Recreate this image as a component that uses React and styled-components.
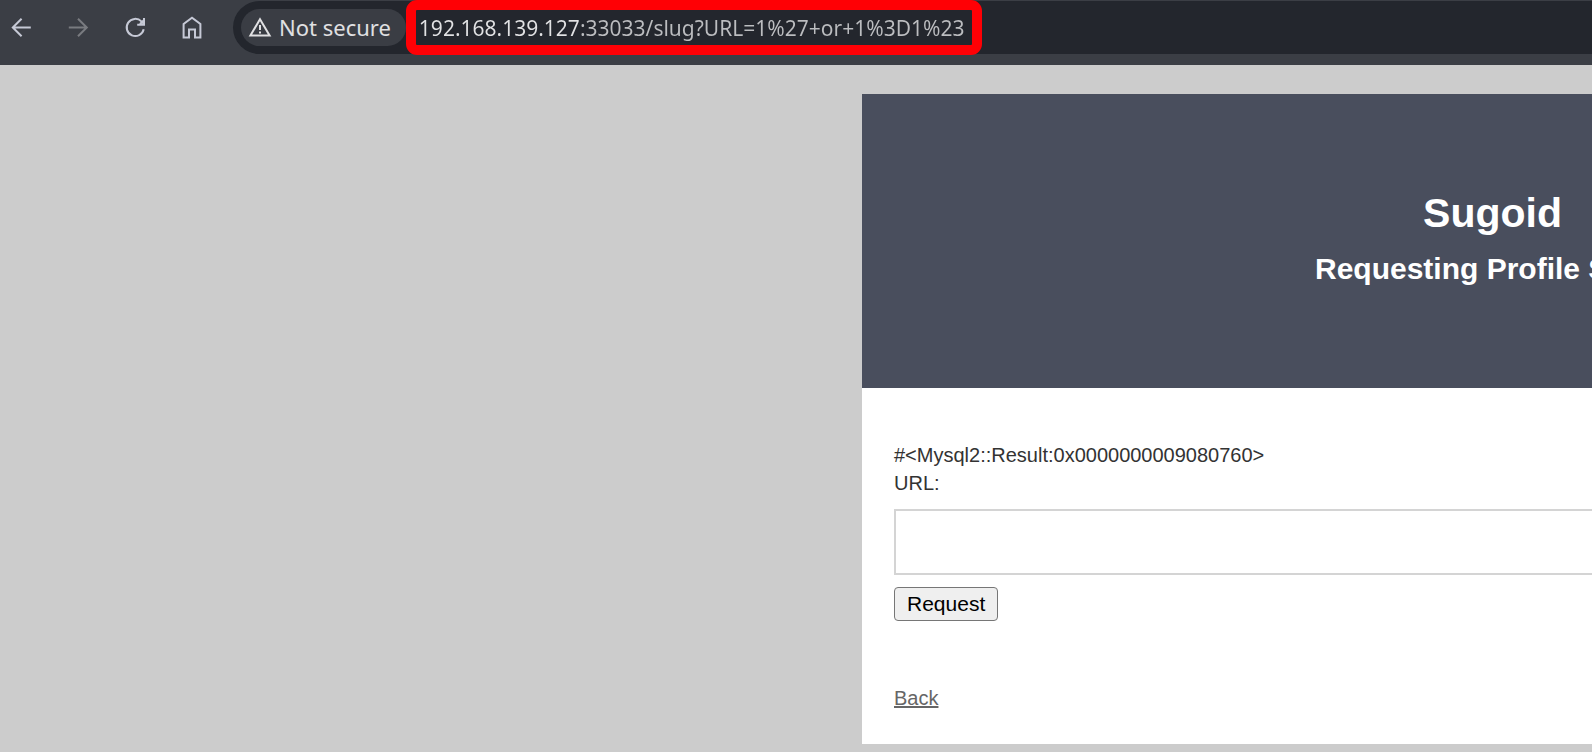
import React from "react";
import styled, { createGlobalStyle } from "styled-components";

const GlobalStyle = createGlobalStyle`
  * {
    box-sizing: border-box;
  }
  body {
    margin: 0;
    background-color: #ccc;
    font-family: "Liberation Sans", Arial, sans-serif;
  }
`;
const Window = styled.div`
  min-height: 100vh;
  overflow: hidden;
`;
const Toolbar = styled.div`
  display: flex;
  height: 65px;
  padding: 1px 0 11px 7px;
  background-color: #3b3e45;
  font-family: "Noto Sans", sans-serif;
  font-size: 22px;
`;
const NavButtons = styled.div`
  display: flex;
  align-items: center;
  gap: 29px;
  margin-right: 27px;
`;
const NavButton = styled.button`
  display: flex;
  padding: 0;
  border: 0;
  background: none;
  color: ${(props) => (props.disabled ? "#797b80" : "#c6c9d6")};
`;
const AddressBar = styled.div`
  display: flex;
  flex: 1;
  align-items: center;
  padding-left: 8px;
  border-radius: 27px 0 0 27px;
  background-color: #23262d;
`;
const SecurityChip = styled.button`
  display: flex;
  align-items: center;
  gap: 7px;
  height: 37px;
  padding: 0 15px 2px 7px;
  border: 0;
  border-radius: 19px;
  background-color: #3a3d44;
  color: #e0e0e2;
  font: inherit;
  white-space: nowrap;
`;
const Highlight = styled.div`
  display: flex;
  align-items: center;
  width: 576px;
  height: 55px;
  padding: 0 3px;
  border: 10px solid #ff0005;
  border-radius: 11px;
`;
/* the host part of the address is brighter than the path */
const Address = styled.input`
  width: 100%;
  padding: 0;
  border: 0;
  outline: 0;
  background: linear-gradient(to right, #e2e2e4 162px, #bcbdc0 162px);
  background-clip: text;
  -webkit-background-clip: text;
  -webkit-text-fill-color: transparent;
  color: #bcbdc0;
  font: inherit;
  font-size: 21px;
`;
const Page = styled.main`
  display: flex;
  justify-content: center;
  width: 187.5%;
  padding: 29px 0 8px;
`;
const Card = styled.div`
  width: 1261px;
  background-color: #fff;
  color: #333;
  font-size: 20px;
  line-height: 28px;
`;
const Header = styled.header`
  display: flex;
  flex-direction: column;
  align-items: center;
  gap: 8px;
  padding: 95px 32px;
  background-color: #494e5d;
  color: #fff;
`;
const Title = styled.h1`
  margin: 0;
  font-size: 41px;
  line-height: 48px;
`;
const Subtitle = styled.h2`
  margin: 0;
  font-size: 30px;
  line-height: 48px;
`;
const Content = styled.div`
  padding: 53px 32px 32px;
`;
const Form = styled.form`
  display: flex;
  flex-direction: column;
  align-items: flex-start;
  gap: 12px;
  margin-bottom: 63px;
`;
const UrlInput = styled.input`
  width: 100%;
  height: 66px;
  padding: 0 16px;
  border: 2px solid #d4d4d4;
  font: inherit;
`;
const RequestButton = styled.button`
  height: 34px;
  padding: 0 12px;
  border: 1px solid #767676;
  border-radius: 4px;
  background-color: #efefef;
  color: #000;
  font-family: inherit;
  font-size: 21px;
`;
const BackLink = styled.a`
  color: #666;
`;

const Icon = ({ children }) => (
  <svg
    width="28"
    height="28"
    viewBox="0 0 28 28"
    fill="none"
    stroke="currentColor"
    strokeWidth="2"
    aria-hidden="true"
  >
    {children}
  </svg>
);

const BackIcon = () => (
  <Icon>
    <path d="M14.6 4.7 5.8 13.5l8.8 8.8M5.8 13.5h18" />
  </Icon>
);
const ForwardIcon = () => (
  <Icon>
    <path d="m14 4.7 8.8 8.8-8.8 8.8M22.8 13.5h-18" />
  </Icon>
);
const ReloadIcon = () => (
  <Icon>
    <path d="M22.7 15.3A8.6 8.6 0 1 1 20.4 7.4L22.5 9.6" />
    <path d="M23 4v6.7h-6.8M22.6 6.5 19 10" />
  </Icon>
);
const HomeIcon = () => (
  <Icon>
    <path d="M5.6 23.4V10L14 3.7l8.4 6.3v13.4h-5.4v-8h-6v8Z" />
  </Icon>
);
const WarningIcon = () => (
  <svg width="24" height="24" viewBox="0 0 24 24" fill="none" aria-hidden="true">
    <path d="M12 4.2 21.6 20.6H2.4Z" stroke="currentColor" strokeWidth="2" />
    <path d="M11 10h2v5h-2zM11 16.4h2v2h-2z" fill="currentColor" />
  </svg>
);

export default function App() {
  return (
    <Window>
      <GlobalStyle />
      <Toolbar>
        <NavButtons>
          <NavButton aria-label="Back">
            <BackIcon />
          </NavButton>
          <NavButton aria-label="Forward" disabled>
            <ForwardIcon />
          </NavButton>
          <NavButton aria-label="Reload">
            <ReloadIcon />
          </NavButton>
          <NavButton aria-label="Home">
            <HomeIcon />
          </NavButton>
        </NavButtons>
        <AddressBar>
          <SecurityChip>
            <WarningIcon />
            Not secure
          </SecurityChip>
          <Highlight>
            <Address
              aria-label="Address"
              defaultValue="192.168.139.127:33033/slug?URL=1%27+or+1%3D1%23"
            />
          </Highlight>
        </AddressBar>
      </Toolbar>
      <Page>
        <Card>
          <Header>
            <Title>Sugoid</Title>
            <Subtitle>Requesting Profile Slugs</Subtitle>
          </Header>
          <Content>
            <div>#&lt;Mysql2::Result:0x0000000009080760&gt;</div>
            <Form>
              <label htmlFor="url">URL:</label>
              <UrlInput id="url" type="text" name="URL" />
              <RequestButton type="submit">Request</RequestButton>
            </Form>
            <BackLink href="#">Back</BackLink>
          </Content>
        </Card>
      </Page>
    </Window>
  );
}
